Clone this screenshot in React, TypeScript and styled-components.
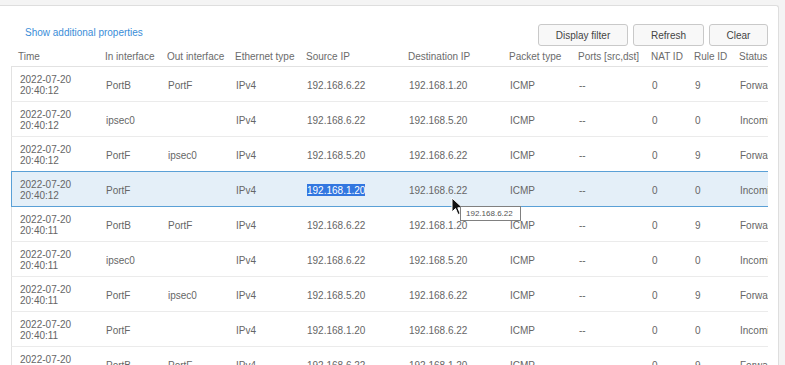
import React from "react";
import styled, { createGlobalStyle } from "styled-components";

const Global = createGlobalStyle`
  html, body { margin: 0; padding: 0; background: #f4f4f4; }
  body { font-family: "Liberation Sans", Arial, sans-serif; overflow: hidden; }
  #root { height: 365px; }
`;

const Page = styled.div`
  height: 365px;
  padding: 5px 6px 0 0;
  box-sizing: border-box;
  background: #f4f4f4;
`;

const Panel = styled.div`
  position: relative;
  height: 100%;
  background: #fff;
  border-top: 1px solid #dedede;
  border-right: 1px solid #dedede;
  border-top-right-radius: 3px;
  box-sizing: border-box;
  padding: 18px 0 0 11px;
`;

const Toolbar = styled.div`
  display: flex;
  align-items: flex-start;
  justify-content: space-between;
  width: 757px;
  height: 24px;
`;

const Link = styled.a`
  margin: 3px 0 0 14px;
  font-size: 10px;
  color: #3a8dd8;
  cursor: pointer;
`;

const Buttons = styled.div`
  display: flex;
  gap: 5px;
`;

const Button = styled.button<{ $w: number }>`
  width: ${(p) => p.$w}px;
  height: 22px;
  font-family: inherit;
  font-size: 10px;
  color: #444;
  background: #f8f8f8;
  border: 1px solid #c9c9c9;
  border-radius: 3px;
  padding: 0;
`;

const TableWrap = styled.div`
  width: 757px;
  overflow: hidden;
  margin-top: 1px;
`;

const cols = "87px 62px 68px 71px 102px 101px 69px 73px 43px 45px 100px";

const HeaderRow = styled.div`
  display: grid;
  grid-template-columns: ${cols};
  width: 821px;
  height: 17px;
  align-items: center;
  font-size: 10px;
  color: #6b6b6b;
`;

const HeadCell = styled.div`
  padding-left: 7px;
  padding-bottom: 2px;
  white-space: nowrap;
`;

const Body = styled.div`
  border-top: 1px solid #e2e2e2;
`;

const Row = styled.div<{ $sel?: boolean }>`
  position: relative;
  display: grid;
  grid-template-columns: ${cols};
  width: 821px;
  height: 35px;
  box-sizing: border-box;
  align-items: center;
  font-size: 10px;
  color: #666;
  border-left: 1px solid ${(p) => (p.$sel ? "#5aa0d6" : "#e2e2e2")};
  border-bottom: 1px solid ${(p) => (p.$sel ? "#5aa0d6" : "#ebebeb")};
  background: ${(p) => (p.$sel ? "#e4eff8" : "#fff")};
  box-shadow: ${(p) => (p.$sel ? "0 -1px 0 #5aa0d6" : "none")};
`;

const Cell = styled.div`
  padding: 3px 0 0 7px;
  white-space: nowrap;
  overflow: hidden;
`;

const TimeCell = styled.div`
  padding: 2px 0 0 8px;
  line-height: 11px;
  white-space: nowrap;
`;

const Selected = styled.span`
  background: #3377e0;
  color: #fff;
  padding: 1px 0;
`;

const Tooltip = styled.div`
  position: absolute;
  left: 460px;
  top: 200px;
  height: 13px;
  padding: 0 7px 0 5px;
  background: #fff;
  border: 1px solid #808080;
  font-size: 8px;
  line-height: 13px;
  color: #555;
  white-space: nowrap;
`;

const Cursor = styled.svg`
  position: absolute;
  left: 451px;
  top: 191px;
`;

type R = {
  d: string;
  t: string;
  i: string;
  o: string;
  s: string;
  dst: string;
  nat: string;
  rule: string;
  st: string;
  sel?: boolean;
};

const rows: R[] = [
  { d: "2022-07-20", t: "20:40:12", i: "PortB", o: "PortF", s: "192.168.6.22", dst: "192.168.1.20", nat: "0", rule: "9", st: "Forwarded" },
  { d: "2022-07-20", t: "20:40:12", i: "ipsec0", o: "", s: "192.168.6.22", dst: "192.168.5.20", nat: "0", rule: "0", st: "Incoming" },
  { d: "2022-07-20", t: "20:40:12", i: "PortF", o: "ipsec0", s: "192.168.5.20", dst: "192.168.6.22", nat: "0", rule: "9", st: "Forwarded" },
  { d: "2022-07-20", t: "20:40:12", i: "PortF", o: "", s: "192.168.1.20", dst: "192.168.6.22", nat: "0", rule: "0", st: "Incoming", sel: true },
  { d: "2022-07-20", t: "20:40:11", i: "PortB", o: "PortF", s: "192.168.6.22", dst: "192.168.1.20", nat: "0", rule: "9", st: "Forwarded" },
  { d: "2022-07-20", t: "20:40:11", i: "ipsec0", o: "", s: "192.168.6.22", dst: "192.168.5.20", nat: "0", rule: "0", st: "Incoming" },
  { d: "2022-07-20", t: "20:40:11", i: "PortF", o: "ipsec0", s: "192.168.5.20", dst: "192.168.6.22", nat: "0", rule: "9", st: "Forwarded" },
  { d: "2022-07-20", t: "20:40:11", i: "PortF", o: "", s: "192.168.1.20", dst: "192.168.6.22", nat: "0", rule: "0", st: "Incoming" },
  { d: "2022-07-20", t: "20:40:11", i: "PortB", o: "PortF", s: "192.168.6.22", dst: "192.168.1.20", nat: "0", rule: "9", st: "Forwarded" },
];

const headers = [
  "Time",
  "In interface",
  "Out interface",
  "Ethernet type",
  "Source IP",
  "Destination IP",
  "Packet type",
  "Ports [src,dst]",
  "NAT ID",
  "Rule ID",
  "Status",
];

export default function App() {
  return (
    <>
      <Global />
      <Page>
        <Panel>
          <Toolbar>
            <Link>Show additional properties</Link>
            <Buttons>
              <Button $w={90}>Display filter</Button>
              <Button $w={71}>Refresh</Button>
              <Button $w={59}>Clear</Button>
            </Buttons>
          </Toolbar>
          <TableWrap>
            <HeaderRow>
              {headers.map((h) => (
                <HeadCell key={h}>{h}</HeadCell>
              ))}
            </HeaderRow>
            <Body>
              {rows.map((r, idx) => (
                <Row key={idx} $sel={r.sel}>
                  <TimeCell>
                    {r.d}
                    <br />
                    {r.t}
                  </TimeCell>
                  <Cell>{r.i}</Cell>
                  <Cell>{r.o}</Cell>
                  <Cell>IPv4</Cell>
                  <Cell>{r.sel ? <Selected>{r.s}</Selected> : r.s}</Cell>
                  <Cell>{r.dst}</Cell>
                  <Cell>ICMP</Cell>
                  <Cell>--</Cell>
                  <Cell>{r.nat}</Cell>
                  <Cell>{r.rule}</Cell>
                  <Cell>{r.st}</Cell>
                </Row>
              ))}
            </Body>
          </TableWrap>
          <Cursor width="14" height="20" viewBox="0 0 14 20">
            <path
              d="M1 1 L1 15 L4.5 11.5 L7 17.5 L9.2 16.6 L6.8 10.8 L11.5 10.8 Z"
              fill="#111"
              stroke="#fff"
              strokeWidth="1"
              strokeLinejoin="round"
            />
          </Cursor>
          <Tooltip>192.168.6.22</Tooltip>
        </Panel>
      </Page>
    </>
  );
}
